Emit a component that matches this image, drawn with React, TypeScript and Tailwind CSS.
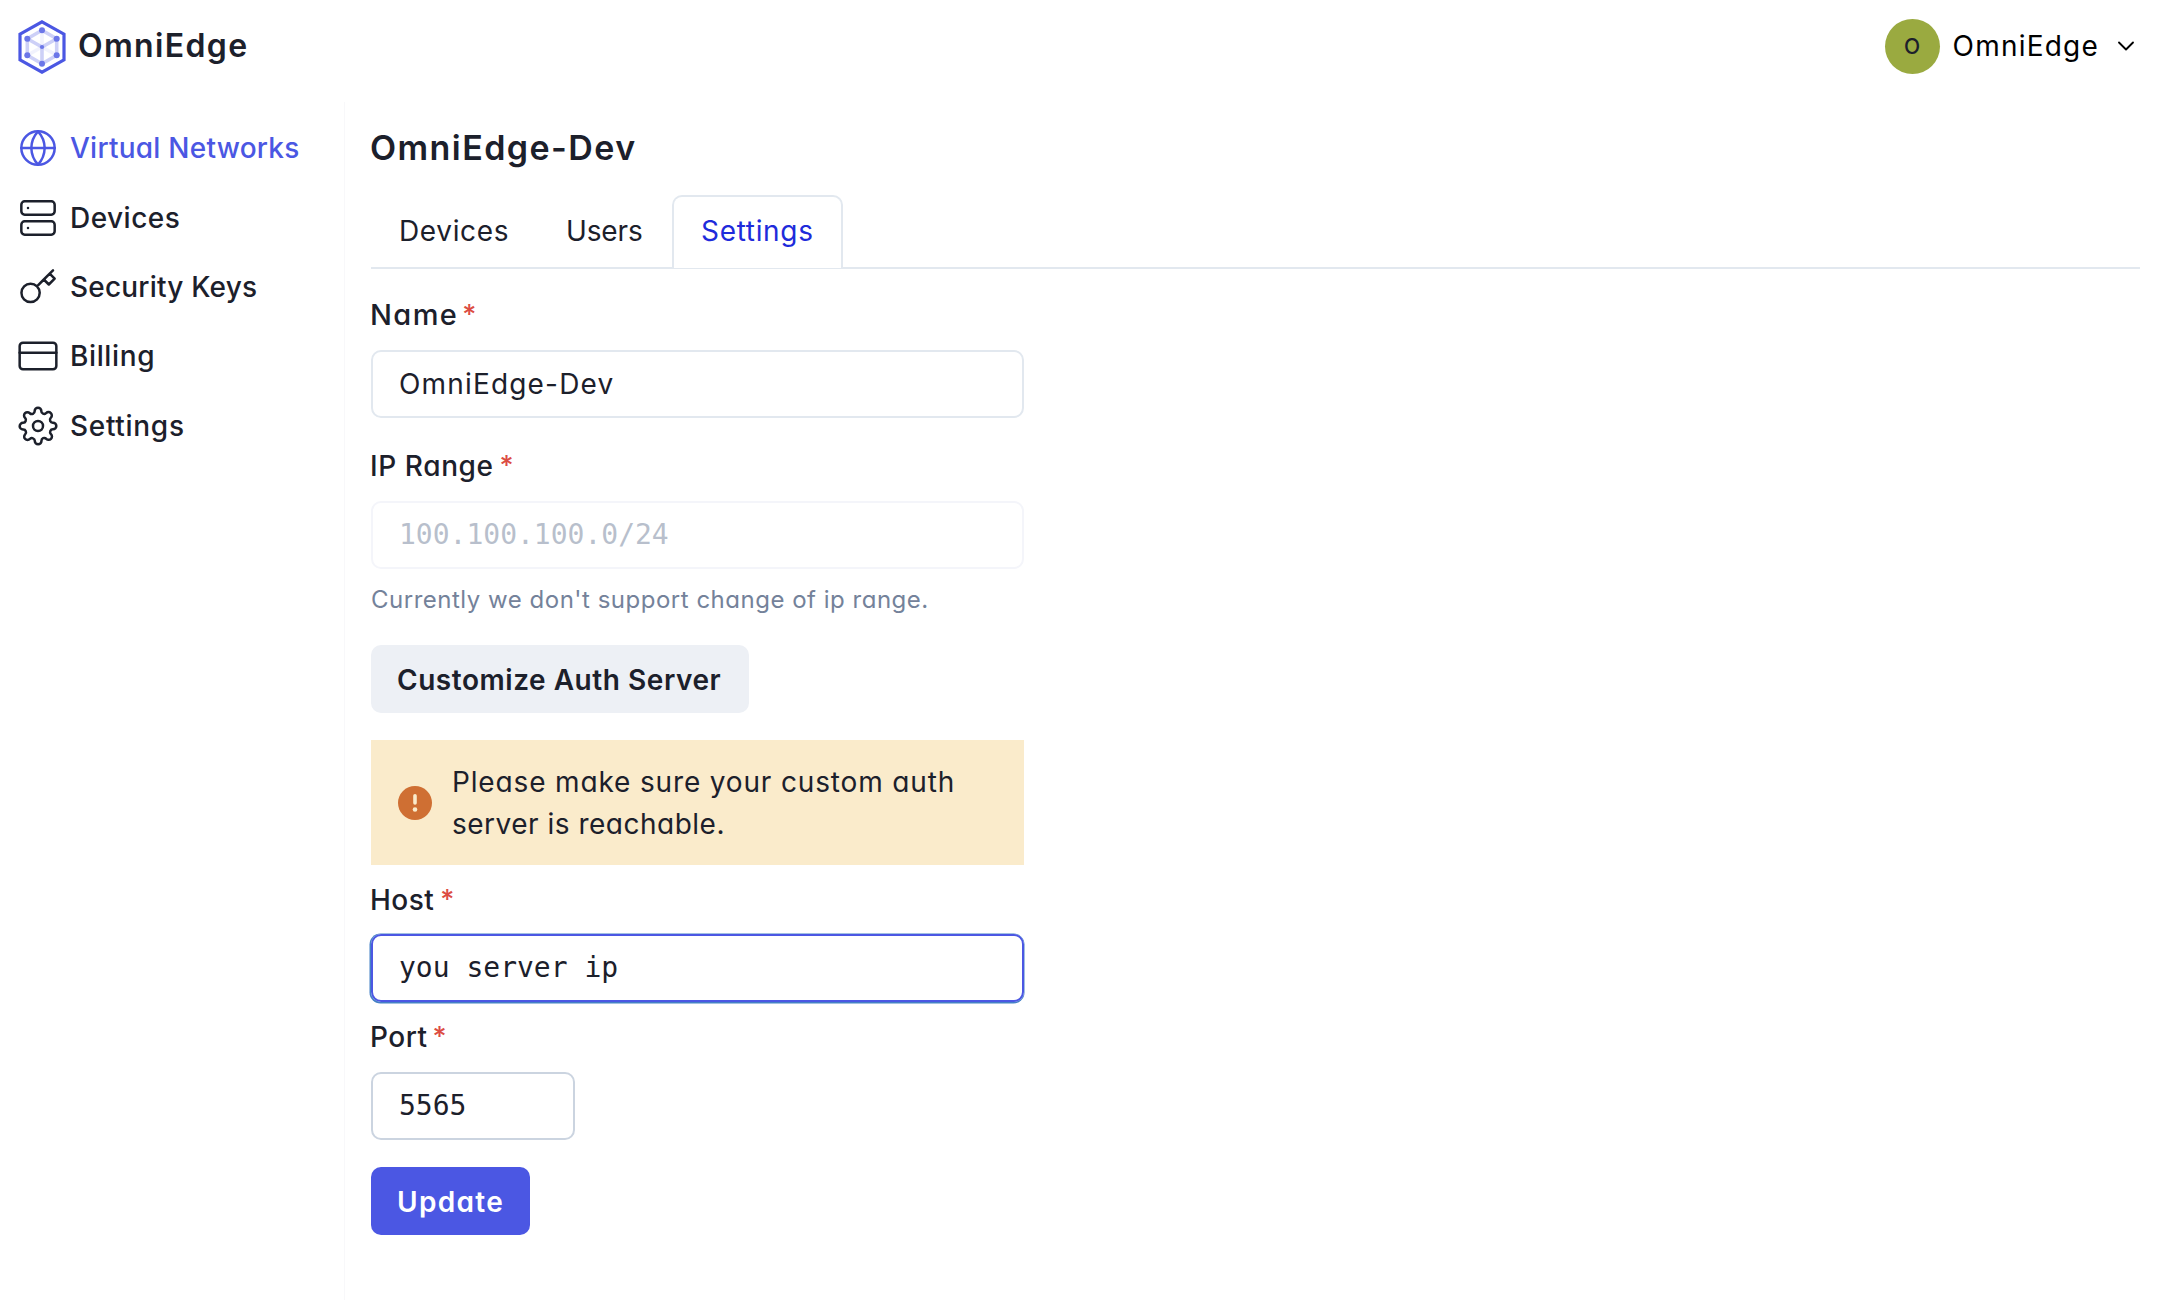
import type { ReactNode } from "react";
import { FiChevronDown, FiCreditCard, FiGlobe, FiKey, FiServer, FiSettings } from "react-icons/fi";

function Logo() {
  return (
    <svg width="48" height="54" viewBox="0 0 48 54" fill="none" className="mt-0.5">
      <path d="M24 1.8 46 14.2V39.8L24 52.2 2 39.8V14.2Z" stroke="#4b57e3" strokeWidth="3.2" />
      <g stroke="#4b57e3" strokeWidth="3.6">
        <path d="M24 10.3 38.7 18.7V35.3L24 43.7 9.3 35.3V18.7Z" strokeOpacity="0.28" />
        <path d="M24 27 9.3 18.7M24 27 38.7 18.7M24 27V43.7" strokeOpacity="0.28" />
        <path d="M24 27 9.3 35.3M24 27 38.7 35.3M24 27V10.3" strokeOpacity="0.08" />
      </g>
      <g fill="#6b76e8">
        <circle cx="24" cy="10.3" r="3" />
        <circle cx="38.7" cy="18.7" r="3" />
        <circle cx="38.7" cy="35.3" r="3" />
        <circle cx="24" cy="43.7" r="3" />
        <circle cx="9.3" cy="35.3" r="3" />
        <circle cx="9.3" cy="18.7" r="3" />
        <circle cx="24" cy="27" r="2.1" />
      </g>
    </svg>
  );
}

function Label({ children, text, star, className }: { children?: ReactNode; text: string; star: string; className: string }) {
  return (
    <label className={`-ml-px flex h-[42px] items-center whitespace-nowrap pt-0.5 font-medium ${className}`}>
      <span className={text}>{children}</span>
      <span className={`text-[27px] text-[#dc4c43] ${star}`}>*</span>
    </label>
  );
}

const nav = [
  { Icon: FiGlobe, label: "Virtual Networks", style: "tracking-[0.24px]", color: "text-[#4b57e3]" },
  { Icon: FiServer, label: "Devices", style: "tracking-[0.47px]", color: "" },
  { Icon: FiKey, label: "Security Keys", style: "tracking-[0.2px]", color: "" },
  { Icon: FiCreditCard, label: "Billing", style: "tracking-[0.62px]", color: "" },
  { Icon: FiSettings, label: "Settings", style: "tracking-[0.69px]", color: "" },
];

export default function App() {
  return (
    <div className="flex h-[1300px] w-[2160px] flex-col overflow-hidden bg-white font-['Inter','Liberation_Sans',sans-serif] text-[28px] leading-[42px] text-[#1c202b] [font-feature-settings:'cv11'] [font-optical-sizing:none]">
      <header className="flex h-[92px] shrink-0 items-center justify-between pl-[18px] pr-5">
        <div className="flex items-center gap-3">
          <Logo />
          <span className="-mt-px text-[32px] font-semibold tracking-[1.35px]">OmniEdge</span>
        </div>
        <div className="flex items-center text-black">
          <span className="flex size-[55px] items-center justify-center rounded-full bg-[#9aaa40] pt-px text-[21px] font-medium text-[#1c202b]">O</span>
          <span className="ml-[13px] tracking-[1.22px]">OmniEdge</span>
          <FiChevronDown size={28} strokeWidth={1.6} className="ml-[13px]" />
        </div>
      </header>

      <div className="flex min-h-0 flex-1">
        <aside className="mt-[10px] w-[345px] shrink-0 border-r border-[#f8f8fa] pl-[18px] pt-[11.5px]">
          {nav.map(({ Icon, label, style, color }) => (
            <a key={label} className={`flex h-[69.4px] items-center gap-3 font-medium whitespace-nowrap ${color}`}>
              <Icon size={40} strokeWidth={1.5} />
              <span className={style}>{label}</span>
            </a>
          ))}
        </aside>

        <main className="flex-1 pl-[26px] pr-5">
          <h1 className="-ml-px mt-[35px] h-[42px] text-[34px] font-semibold tracking-[1.43px]">OmniEdge-Dev</h1>

          <div className="mt-[26px] flex h-[74px] items-start border-b-2 border-[#e2e8ef]">
            <div className="h-[73px] w-[168px] pl-[28px] pt-[15px] tracking-[0.65px]">Devices</div>
            <div className="h-[73px] w-[133px] pl-[27px] pt-[15px] tracking-[-0.14px]">Users</div>
            <div className="h-[73px] w-[171px] rounded-t-[10px] border-2 border-b-0 border-[#e2e8ef] bg-white pl-[27px] pt-[13px] tracking-[0.68px] text-[#1e2bdb]">
              Settings
            </div>
          </div>

          <form className="w-[653px]">
            <Label className="mt-6" text="text-[29px] tracking-[1.4px]" star="ml-[4px]">Name</Label>
            <div className="mt-[15px] flex h-[68px] items-center rounded-[10px] border-2 border-[#e2e8ef] pl-[26px] tracking-[1.17px]">
              OmniEdge-Dev
            </div>

            <Label className="mt-[26px]" text="tracking-[0.6px]" star="ml-[6px]">IP Range</Label>
            <div className="mt-[15px] flex h-[68px] items-center rounded-[10px] border-2 border-[#f4f5fa] pl-[26px] font-['DejaVu_Sans_Mono',monospace] text-[28px] text-[#b8bfcc]">
              100.100.100.0/24
            </div>
            <p className="mt-[13px] h-9 whitespace-nowrap text-[24px] leading-9 tracking-[0.51px] text-[#74829a]">
              Currently we don't support change of ip range.
            </p>

            <button type="button" className="mt-[27px] flex h-[68px] w-[378px] items-center whitespace-nowrap rounded-[10px] bg-[#edf0f5] pl-[26px] pt-px font-semibold tracking-[0.54px]">
              Customize Auth Server
            </button>

            <div className="mt-[27px] flex h-[125px] items-center bg-[#faebcb] pl-[27px]">
              <svg width="34" height="34" viewBox="0 0 34 34">
                <circle cx="17" cy="17" r="17" fill="#cf6f33" />
                <rect x="15.2" y="8" width="3.6" height="10.8" rx="1.8" fill="#faebcb" />
                <circle cx="17" cy="23.5" r="2.3" fill="#faebcb" />
              </svg>
              <p className="ml-5 whitespace-nowrap">
                <span className="block tracking-[0.85px]">Please make sure your custom auth</span>
                <span className="block tracking-[0.5px]">server is reachable.</span>
              </p>
            </div>

            <Label className="mt-[13px]" text="tracking-[0.44px]" star="ml-[6px]">Host</Label>
            <div className="mt-[14px] flex h-[68px] items-center rounded-[10px] border-2 border-[#4b57e3] pl-[26px] font-['DejaVu_Sans_Mono',monospace] text-[28px] shadow-[-0.5px_0.5px_0_1px_#4581c6]">
              you server ip
            </div>

            <Label className="mt-[13px]" text="tracking-[0.49px]" star="ml-[5px]">Port</Label>
            <div className="mt-[15px] flex h-[68px] w-[204px] items-center rounded-[10px] border-2 border-[#cbd4e0] pl-[26px] font-['DejaVu_Sans_Mono',monospace] text-[28px]">
              5565
            </div>

            <button type="button" className="mt-[27px] flex h-[68px] w-[159px] items-center rounded-[10px] bg-[#4b57e3] pl-[26px] pt-px font-semibold tracking-[1.3px] text-white">
              Update
            </button>
          </form>
        </main>
      </div>
    </div>
  );
}
